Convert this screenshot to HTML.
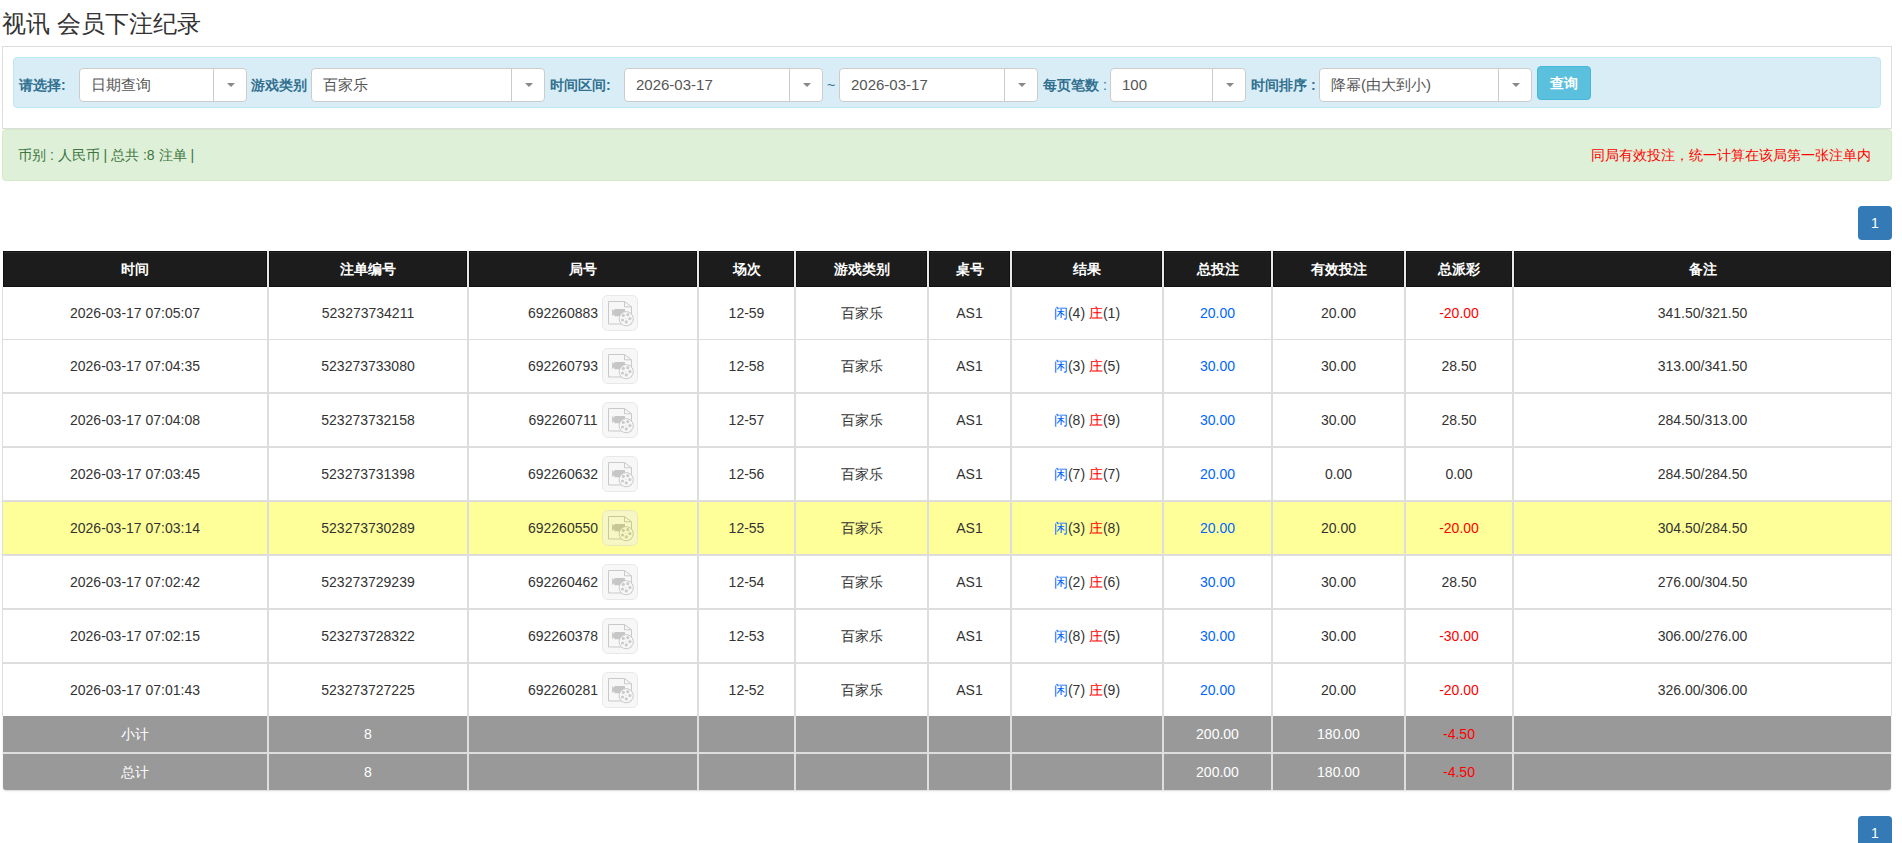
<!DOCTYPE html>
<html><head><meta charset="utf-8"><title>视讯 会员下注纪录</title>
<style>
*{box-sizing:border-box}
html,body{margin:0;padding:0;background:#fff}
body{width:1902px;height:843px;overflow:hidden;position:relative;font-family:"Liberation Sans",sans-serif;color:#333}
.a{position:absolute}
.title{left:2px;top:1px;font-size:24px;line-height:46px;color:#333;white-space:nowrap}
.box{left:2px;top:46px;width:1890px;height:83px;border:1px solid #ddd}
.info{left:13px;top:57px;width:1868px;height:51px;background:#d9edf7;border:1px solid #bce8f1;border-radius:4px}
.lbl{font-size:14px;font-weight:bold;color:#31708f;white-space:nowrap;line-height:34px;top:68px}
.sel{top:68px;height:34px;background:#fff;border:1px solid #ccc;border-radius:4px}
.sel .t{position:absolute;left:11px;top:0;line-height:32px;font-size:15px;color:#555;white-space:nowrap}
.sel .d{position:absolute;top:0;bottom:0;width:1px;background:#ccc}
.sel .c{position:absolute;top:14px;width:0;height:0;border-left:4px solid transparent;border-right:4px solid transparent;border-top:4px solid #888}
.btn{left:1537px;top:66px;width:54px;height:34px;background:#5bc0de;border:1px solid #46b8da;border-radius:4px;color:#fff;font-weight:bold;font-size:14px;text-align:center;line-height:33px}
.ok{left:2px;top:129px;width:1890px;height:52px;background:#dff0d8;border:1px solid #d6e9c6;border-radius:4px;font-size:14px;line-height:50px}
.pg{left:1858px;width:34px;height:34px;background:#337ab7;border-radius:4px;color:#fff;font-size:14px;text-align:center;line-height:34px}
.cell{text-align:center;white-space:nowrap;font-size:14px}
.hd{color:#fff;font-weight:bold;font-size:14px}
.b{color:#0066ff}.r{color:#ff0000}
.ib{width:36px;height:36px;border:1px solid #e3e3e3;border-radius:5px;background:#f9f9f9}
</style></head><body>

<div class="a title">视讯 会员下注纪录</div>
<div class="a box"></div>
<div class="a info"></div>
<div class="a lbl" style="left:19px">请选择:</div>
<div class="a sel" style="left:79px;width:168px"><div class="t">日期查询</div><div class="d" style="left:133px"></div><div class="c" style="left:147px"></div></div>
<div class="a lbl" style="left:251px">游戏类别</div>
<div class="a sel" style="left:311px;width:234px"><div class="t">百家乐</div><div class="d" style="left:199px"></div><div class="c" style="left:213px"></div></div>
<div class="a lbl" style="left:550px">时间区间:</div>
<div class="a sel" style="left:624px;width:199px"><div class="t">2026-03-17</div><div class="d" style="left:164px"></div><div class="c" style="left:178px"></div></div>
<div class="a lbl" style="left:827px;font-weight:normal;color:#31708f">~</div>
<div class="a sel" style="left:839px;width:199px"><div class="t">2026-03-17</div><div class="d" style="left:164px"></div><div class="c" style="left:178px"></div></div>
<div class="a lbl" style="left:1043px">每页笔数 <span style="font-weight:normal">:</span></div>
<div class="a sel" style="left:1110px;width:136px"><div class="t">100</div><div class="d" style="left:101px"></div><div class="c" style="left:115px"></div></div>
<div class="a lbl" style="left:1251px">时间排序 :</div>
<div class="a sel" style="left:1319px;width:213px"><div class="t">降幂(由大到小)</div><div class="d" style="left:178px"></div><div class="c" style="left:192px"></div></div>
<div class="a btn">查询</div>
<div class="a ok"><span class="a" style="left:15px;top:0;color:#3c763d;white-space:nowrap">币别 : 人民币 | 总共 :8 注单 |</span><span class="a" style="right:20px;top:0;color:#ff0000;white-space:nowrap">同局有效投注，统一计算在该局第一张注单内</span></div>
<div class="a pg" style="top:206px">1</div>
<div class="a" style="left:3px;top:251px;width:1888px;height:36px;background:#1c1c1c;border:1px solid #111"></div>
<div class="a" style="left:4px;top:252px;width:1886px;height:1px;background:#2a2a2a"></div>
<div class="a cell hd" style="left:3px;top:251px;width:264px;height:36px;line-height:36px">时间</div>
<div class="a cell hd" style="left:269px;top:251px;width:198px;height:36px;line-height:36px">注单编号</div>
<div class="a cell hd" style="left:469px;top:251px;width:228px;height:36px;line-height:36px">局号</div>
<div class="a cell hd" style="left:699px;top:251px;width:95px;height:36px;line-height:36px">场次</div>
<div class="a cell hd" style="left:796px;top:251px;width:131px;height:36px;line-height:36px">游戏类别</div>
<div class="a cell hd" style="left:929px;top:251px;width:81px;height:36px;line-height:36px">桌号</div>
<div class="a cell hd" style="left:1012px;top:251px;width:150px;height:36px;line-height:36px">结果</div>
<div class="a cell hd" style="left:1164px;top:251px;width:107px;height:36px;line-height:36px">总投注</div>
<div class="a cell hd" style="left:1273px;top:251px;width:131px;height:36px;line-height:36px">有效投注</div>
<div class="a cell hd" style="left:1406px;top:251px;width:106px;height:36px;line-height:36px">总派彩</div>
<div class="a cell hd" style="left:1514px;top:251px;width:377px;height:36px;line-height:36px">备注</div>
<div class="a" style="left:266px;top:251px;width:4px;height:36px;background:#111"></div>
<div class="a" style="left:267px;top:250px;width:2px;height:37px;background:#e8e8e8"></div>
<div class="a" style="left:466px;top:251px;width:4px;height:36px;background:#111"></div>
<div class="a" style="left:467px;top:250px;width:2px;height:37px;background:#e8e8e8"></div>
<div class="a" style="left:696px;top:251px;width:4px;height:36px;background:#111"></div>
<div class="a" style="left:697px;top:250px;width:2px;height:37px;background:#e8e8e8"></div>
<div class="a" style="left:793px;top:251px;width:4px;height:36px;background:#111"></div>
<div class="a" style="left:794px;top:250px;width:2px;height:37px;background:#e8e8e8"></div>
<div class="a" style="left:926px;top:251px;width:4px;height:36px;background:#111"></div>
<div class="a" style="left:927px;top:250px;width:2px;height:37px;background:#e8e8e8"></div>
<div class="a" style="left:1009px;top:251px;width:4px;height:36px;background:#111"></div>
<div class="a" style="left:1010px;top:250px;width:2px;height:37px;background:#e8e8e8"></div>
<div class="a" style="left:1161px;top:251px;width:4px;height:36px;background:#111"></div>
<div class="a" style="left:1162px;top:250px;width:2px;height:37px;background:#e8e8e8"></div>
<div class="a" style="left:1270px;top:251px;width:4px;height:36px;background:#111"></div>
<div class="a" style="left:1271px;top:250px;width:2px;height:37px;background:#e8e8e8"></div>
<div class="a" style="left:1403px;top:251px;width:4px;height:36px;background:#111"></div>
<div class="a" style="left:1404px;top:250px;width:2px;height:37px;background:#e8e8e8"></div>
<div class="a" style="left:1511px;top:251px;width:4px;height:36px;background:#111"></div>
<div class="a" style="left:1512px;top:250px;width:2px;height:37px;background:#e8e8e8"></div>
<div class="a" style="left:3px;top:287px;width:1888px;height:52px;background:#fff"></div>
<div class="a cell" style="left:3px;top:287px;width:264px;height:52px;line-height:52px">2026-03-17 07:05:07</div>
<div class="a cell" style="left:269px;top:287px;width:198px;height:52px;line-height:52px">523273734211</div>
<div class="a cell" style="left:469px;top:287px;width:228px;height:52px;line-height:52px">692260883<span style="display:inline-block;width:40px"></span></div>
<div class="a cell" style="left:699px;top:287px;width:95px;height:52px;line-height:52px">12-59</div>
<div class="a cell" style="left:796px;top:287px;width:131px;height:52px;line-height:52px">百家乐</div>
<div class="a cell" style="left:929px;top:287px;width:81px;height:52px;line-height:52px">AS1</div>
<div class="a cell" style="left:1012px;top:287px;width:150px;height:52px;line-height:52px"><span class="b">闲</span>(4) <span class="r">庄</span>(1)</div>
<div class="a cell b" style="left:1164px;top:287px;width:107px;height:52px;line-height:52px">20.00</div>
<div class="a cell" style="left:1273px;top:287px;width:131px;height:52px;line-height:52px">20.00</div>
<div class="a cell r" style="left:1406px;top:287px;width:106px;height:52px;line-height:52px">-20.00</div>
<div class="a cell" style="left:1514px;top:287px;width:377px;height:52px;line-height:52px">341.50/321.50</div>
<svg class="a" style="left:600px;top:293px;opacity:.5" width="40" height="40" viewBox="0 0 40 40"><rect x="2.5" y="2.5" width="35" height="35" rx="5" fill="#f1f1f1" stroke="#d3d3d3"/><path d="M8.5 8.5H24.5L31.5 13.8V31H8.5Z" fill="none" stroke="#959595"/><path d="M24.5 8.5V13.8H31.5" fill="none" stroke="#959595"/><path d="M12.1 15.9L14.3 18V16H25V23.3H14.3V21.2L12.1 22.9Z" fill="#8f8f8f"/><circle cx="26.2" cy="25.7" r="7.1" fill="#f1f1f1" stroke="#959595"/><g fill="#9a9a9a"><circle cx="23.3" cy="22.4" r="1.6"/><circle cx="27.8" cy="21.7" r="1.6"/><circle cx="29.9" cy="25.6" r="1.6"/><circle cx="26.3" cy="28.9" r="1.6"/><circle cx="22.5" cy="27" r="1.6"/><circle cx="25.9" cy="25.4" r=".5"/></g></svg>
<div class="a" style="left:3px;top:340px;width:1888px;height:52px;background:#fff"></div>
<div class="a cell" style="left:3px;top:340px;width:264px;height:52px;line-height:52px">2026-03-17 07:04:35</div>
<div class="a cell" style="left:269px;top:340px;width:198px;height:52px;line-height:52px">523273733080</div>
<div class="a cell" style="left:469px;top:340px;width:228px;height:52px;line-height:52px">692260793<span style="display:inline-block;width:40px"></span></div>
<div class="a cell" style="left:699px;top:340px;width:95px;height:52px;line-height:52px">12-58</div>
<div class="a cell" style="left:796px;top:340px;width:131px;height:52px;line-height:52px">百家乐</div>
<div class="a cell" style="left:929px;top:340px;width:81px;height:52px;line-height:52px">AS1</div>
<div class="a cell" style="left:1012px;top:340px;width:150px;height:52px;line-height:52px"><span class="b">闲</span>(3) <span class="r">庄</span>(5)</div>
<div class="a cell b" style="left:1164px;top:340px;width:107px;height:52px;line-height:52px">30.00</div>
<div class="a cell" style="left:1273px;top:340px;width:131px;height:52px;line-height:52px">30.00</div>
<div class="a cell" style="left:1406px;top:340px;width:106px;height:52px;line-height:52px">28.50</div>
<div class="a cell" style="left:1514px;top:340px;width:377px;height:52px;line-height:52px">313.00/341.50</div>
<svg class="a" style="left:600px;top:346px;opacity:.5" width="40" height="40" viewBox="0 0 40 40"><rect x="2.5" y="2.5" width="35" height="35" rx="5" fill="#f1f1f1" stroke="#d3d3d3"/><path d="M8.5 8.5H24.5L31.5 13.8V31H8.5Z" fill="none" stroke="#959595"/><path d="M24.5 8.5V13.8H31.5" fill="none" stroke="#959595"/><path d="M12.1 15.9L14.3 18V16H25V23.3H14.3V21.2L12.1 22.9Z" fill="#8f8f8f"/><circle cx="26.2" cy="25.7" r="7.1" fill="#f1f1f1" stroke="#959595"/><g fill="#9a9a9a"><circle cx="23.3" cy="22.4" r="1.6"/><circle cx="27.8" cy="21.7" r="1.6"/><circle cx="29.9" cy="25.6" r="1.6"/><circle cx="26.3" cy="28.9" r="1.6"/><circle cx="22.5" cy="27" r="1.6"/><circle cx="25.9" cy="25.4" r=".5"/></g></svg>
<div class="a" style="left:3px;top:394px;width:1888px;height:52px;background:#fff"></div>
<div class="a cell" style="left:3px;top:394px;width:264px;height:52px;line-height:52px">2026-03-17 07:04:08</div>
<div class="a cell" style="left:269px;top:394px;width:198px;height:52px;line-height:52px">523273732158</div>
<div class="a cell" style="left:469px;top:394px;width:228px;height:52px;line-height:52px">692260711<span style="display:inline-block;width:40px"></span></div>
<div class="a cell" style="left:699px;top:394px;width:95px;height:52px;line-height:52px">12-57</div>
<div class="a cell" style="left:796px;top:394px;width:131px;height:52px;line-height:52px">百家乐</div>
<div class="a cell" style="left:929px;top:394px;width:81px;height:52px;line-height:52px">AS1</div>
<div class="a cell" style="left:1012px;top:394px;width:150px;height:52px;line-height:52px"><span class="b">闲</span>(8) <span class="r">庄</span>(9)</div>
<div class="a cell b" style="left:1164px;top:394px;width:107px;height:52px;line-height:52px">30.00</div>
<div class="a cell" style="left:1273px;top:394px;width:131px;height:52px;line-height:52px">30.00</div>
<div class="a cell" style="left:1406px;top:394px;width:106px;height:52px;line-height:52px">28.50</div>
<div class="a cell" style="left:1514px;top:394px;width:377px;height:52px;line-height:52px">284.50/313.00</div>
<svg class="a" style="left:600px;top:400px;opacity:.5" width="40" height="40" viewBox="0 0 40 40"><rect x="2.5" y="2.5" width="35" height="35" rx="5" fill="#f1f1f1" stroke="#d3d3d3"/><path d="M8.5 8.5H24.5L31.5 13.8V31H8.5Z" fill="none" stroke="#959595"/><path d="M24.5 8.5V13.8H31.5" fill="none" stroke="#959595"/><path d="M12.1 15.9L14.3 18V16H25V23.3H14.3V21.2L12.1 22.9Z" fill="#8f8f8f"/><circle cx="26.2" cy="25.7" r="7.1" fill="#f1f1f1" stroke="#959595"/><g fill="#9a9a9a"><circle cx="23.3" cy="22.4" r="1.6"/><circle cx="27.8" cy="21.7" r="1.6"/><circle cx="29.9" cy="25.6" r="1.6"/><circle cx="26.3" cy="28.9" r="1.6"/><circle cx="22.5" cy="27" r="1.6"/><circle cx="25.9" cy="25.4" r=".5"/></g></svg>
<div class="a" style="left:3px;top:448px;width:1888px;height:52px;background:#fff"></div>
<div class="a cell" style="left:3px;top:448px;width:264px;height:52px;line-height:52px">2026-03-17 07:03:45</div>
<div class="a cell" style="left:269px;top:448px;width:198px;height:52px;line-height:52px">523273731398</div>
<div class="a cell" style="left:469px;top:448px;width:228px;height:52px;line-height:52px">692260632<span style="display:inline-block;width:40px"></span></div>
<div class="a cell" style="left:699px;top:448px;width:95px;height:52px;line-height:52px">12-56</div>
<div class="a cell" style="left:796px;top:448px;width:131px;height:52px;line-height:52px">百家乐</div>
<div class="a cell" style="left:929px;top:448px;width:81px;height:52px;line-height:52px">AS1</div>
<div class="a cell" style="left:1012px;top:448px;width:150px;height:52px;line-height:52px"><span class="b">闲</span>(7) <span class="r">庄</span>(7)</div>
<div class="a cell b" style="left:1164px;top:448px;width:107px;height:52px;line-height:52px">20.00</div>
<div class="a cell" style="left:1273px;top:448px;width:131px;height:52px;line-height:52px">0.00</div>
<div class="a cell" style="left:1406px;top:448px;width:106px;height:52px;line-height:52px">0.00</div>
<div class="a cell" style="left:1514px;top:448px;width:377px;height:52px;line-height:52px">284.50/284.50</div>
<svg class="a" style="left:600px;top:454px;opacity:.5" width="40" height="40" viewBox="0 0 40 40"><rect x="2.5" y="2.5" width="35" height="35" rx="5" fill="#f1f1f1" stroke="#d3d3d3"/><path d="M8.5 8.5H24.5L31.5 13.8V31H8.5Z" fill="none" stroke="#959595"/><path d="M24.5 8.5V13.8H31.5" fill="none" stroke="#959595"/><path d="M12.1 15.9L14.3 18V16H25V23.3H14.3V21.2L12.1 22.9Z" fill="#8f8f8f"/><circle cx="26.2" cy="25.7" r="7.1" fill="#f1f1f1" stroke="#959595"/><g fill="#9a9a9a"><circle cx="23.3" cy="22.4" r="1.6"/><circle cx="27.8" cy="21.7" r="1.6"/><circle cx="29.9" cy="25.6" r="1.6"/><circle cx="26.3" cy="28.9" r="1.6"/><circle cx="22.5" cy="27" r="1.6"/><circle cx="25.9" cy="25.4" r=".5"/></g></svg>
<div class="a" style="left:3px;top:502px;width:1888px;height:52px;background:#ffff99"></div>
<div class="a cell" style="left:3px;top:502px;width:264px;height:52px;line-height:52px">2026-03-17 07:03:14</div>
<div class="a cell" style="left:269px;top:502px;width:198px;height:52px;line-height:52px">523273730289</div>
<div class="a cell" style="left:469px;top:502px;width:228px;height:52px;line-height:52px">692260550<span style="display:inline-block;width:40px"></span></div>
<div class="a cell" style="left:699px;top:502px;width:95px;height:52px;line-height:52px">12-55</div>
<div class="a cell" style="left:796px;top:502px;width:131px;height:52px;line-height:52px">百家乐</div>
<div class="a cell" style="left:929px;top:502px;width:81px;height:52px;line-height:52px">AS1</div>
<div class="a cell" style="left:1012px;top:502px;width:150px;height:52px;line-height:52px"><span class="b">闲</span>(3) <span class="r">庄</span>(8)</div>
<div class="a cell b" style="left:1164px;top:502px;width:107px;height:52px;line-height:52px">20.00</div>
<div class="a cell" style="left:1273px;top:502px;width:131px;height:52px;line-height:52px">20.00</div>
<div class="a cell r" style="left:1406px;top:502px;width:106px;height:52px;line-height:52px">-20.00</div>
<div class="a cell" style="left:1514px;top:502px;width:377px;height:52px;line-height:52px">304.50/284.50</div>
<svg class="a" style="left:600px;top:508px;opacity:.5" width="40" height="40" viewBox="0 0 40 40"><rect x="2.5" y="2.5" width="35" height="35" rx="5" fill="#f1f1f1" stroke="#d3d3d3"/><path d="M8.5 8.5H24.5L31.5 13.8V31H8.5Z" fill="none" stroke="#959595"/><path d="M24.5 8.5V13.8H31.5" fill="none" stroke="#959595"/><path d="M12.1 15.9L14.3 18V16H25V23.3H14.3V21.2L12.1 22.9Z" fill="#8f8f8f"/><circle cx="26.2" cy="25.7" r="7.1" fill="#f1f1f1" stroke="#959595"/><g fill="#9a9a9a"><circle cx="23.3" cy="22.4" r="1.6"/><circle cx="27.8" cy="21.7" r="1.6"/><circle cx="29.9" cy="25.6" r="1.6"/><circle cx="26.3" cy="28.9" r="1.6"/><circle cx="22.5" cy="27" r="1.6"/><circle cx="25.9" cy="25.4" r=".5"/></g></svg>
<div class="a" style="left:3px;top:556px;width:1888px;height:52px;background:#fff"></div>
<div class="a cell" style="left:3px;top:556px;width:264px;height:52px;line-height:52px">2026-03-17 07:02:42</div>
<div class="a cell" style="left:269px;top:556px;width:198px;height:52px;line-height:52px">523273729239</div>
<div class="a cell" style="left:469px;top:556px;width:228px;height:52px;line-height:52px">692260462<span style="display:inline-block;width:40px"></span></div>
<div class="a cell" style="left:699px;top:556px;width:95px;height:52px;line-height:52px">12-54</div>
<div class="a cell" style="left:796px;top:556px;width:131px;height:52px;line-height:52px">百家乐</div>
<div class="a cell" style="left:929px;top:556px;width:81px;height:52px;line-height:52px">AS1</div>
<div class="a cell" style="left:1012px;top:556px;width:150px;height:52px;line-height:52px"><span class="b">闲</span>(2) <span class="r">庄</span>(6)</div>
<div class="a cell b" style="left:1164px;top:556px;width:107px;height:52px;line-height:52px">30.00</div>
<div class="a cell" style="left:1273px;top:556px;width:131px;height:52px;line-height:52px">30.00</div>
<div class="a cell" style="left:1406px;top:556px;width:106px;height:52px;line-height:52px">28.50</div>
<div class="a cell" style="left:1514px;top:556px;width:377px;height:52px;line-height:52px">276.00/304.50</div>
<svg class="a" style="left:600px;top:562px;opacity:.5" width="40" height="40" viewBox="0 0 40 40"><rect x="2.5" y="2.5" width="35" height="35" rx="5" fill="#f1f1f1" stroke="#d3d3d3"/><path d="M8.5 8.5H24.5L31.5 13.8V31H8.5Z" fill="none" stroke="#959595"/><path d="M24.5 8.5V13.8H31.5" fill="none" stroke="#959595"/><path d="M12.1 15.9L14.3 18V16H25V23.3H14.3V21.2L12.1 22.9Z" fill="#8f8f8f"/><circle cx="26.2" cy="25.7" r="7.1" fill="#f1f1f1" stroke="#959595"/><g fill="#9a9a9a"><circle cx="23.3" cy="22.4" r="1.6"/><circle cx="27.8" cy="21.7" r="1.6"/><circle cx="29.9" cy="25.6" r="1.6"/><circle cx="26.3" cy="28.9" r="1.6"/><circle cx="22.5" cy="27" r="1.6"/><circle cx="25.9" cy="25.4" r=".5"/></g></svg>
<div class="a" style="left:3px;top:610px;width:1888px;height:52px;background:#fff"></div>
<div class="a cell" style="left:3px;top:610px;width:264px;height:52px;line-height:52px">2026-03-17 07:02:15</div>
<div class="a cell" style="left:269px;top:610px;width:198px;height:52px;line-height:52px">523273728322</div>
<div class="a cell" style="left:469px;top:610px;width:228px;height:52px;line-height:52px">692260378<span style="display:inline-block;width:40px"></span></div>
<div class="a cell" style="left:699px;top:610px;width:95px;height:52px;line-height:52px">12-53</div>
<div class="a cell" style="left:796px;top:610px;width:131px;height:52px;line-height:52px">百家乐</div>
<div class="a cell" style="left:929px;top:610px;width:81px;height:52px;line-height:52px">AS1</div>
<div class="a cell" style="left:1012px;top:610px;width:150px;height:52px;line-height:52px"><span class="b">闲</span>(8) <span class="r">庄</span>(5)</div>
<div class="a cell b" style="left:1164px;top:610px;width:107px;height:52px;line-height:52px">30.00</div>
<div class="a cell" style="left:1273px;top:610px;width:131px;height:52px;line-height:52px">30.00</div>
<div class="a cell r" style="left:1406px;top:610px;width:106px;height:52px;line-height:52px">-30.00</div>
<div class="a cell" style="left:1514px;top:610px;width:377px;height:52px;line-height:52px">306.00/276.00</div>
<svg class="a" style="left:600px;top:616px;opacity:.5" width="40" height="40" viewBox="0 0 40 40"><rect x="2.5" y="2.5" width="35" height="35" rx="5" fill="#f1f1f1" stroke="#d3d3d3"/><path d="M8.5 8.5H24.5L31.5 13.8V31H8.5Z" fill="none" stroke="#959595"/><path d="M24.5 8.5V13.8H31.5" fill="none" stroke="#959595"/><path d="M12.1 15.9L14.3 18V16H25V23.3H14.3V21.2L12.1 22.9Z" fill="#8f8f8f"/><circle cx="26.2" cy="25.7" r="7.1" fill="#f1f1f1" stroke="#959595"/><g fill="#9a9a9a"><circle cx="23.3" cy="22.4" r="1.6"/><circle cx="27.8" cy="21.7" r="1.6"/><circle cx="29.9" cy="25.6" r="1.6"/><circle cx="26.3" cy="28.9" r="1.6"/><circle cx="22.5" cy="27" r="1.6"/><circle cx="25.9" cy="25.4" r=".5"/></g></svg>
<div class="a" style="left:3px;top:664px;width:1888px;height:52px;background:#fff"></div>
<div class="a cell" style="left:3px;top:664px;width:264px;height:52px;line-height:52px">2026-03-17 07:01:43</div>
<div class="a cell" style="left:269px;top:664px;width:198px;height:52px;line-height:52px">523273727225</div>
<div class="a cell" style="left:469px;top:664px;width:228px;height:52px;line-height:52px">692260281<span style="display:inline-block;width:40px"></span></div>
<div class="a cell" style="left:699px;top:664px;width:95px;height:52px;line-height:52px">12-52</div>
<div class="a cell" style="left:796px;top:664px;width:131px;height:52px;line-height:52px">百家乐</div>
<div class="a cell" style="left:929px;top:664px;width:81px;height:52px;line-height:52px">AS1</div>
<div class="a cell" style="left:1012px;top:664px;width:150px;height:52px;line-height:52px"><span class="b">闲</span>(7) <span class="r">庄</span>(9)</div>
<div class="a cell b" style="left:1164px;top:664px;width:107px;height:52px;line-height:52px">20.00</div>
<div class="a cell" style="left:1273px;top:664px;width:131px;height:52px;line-height:52px">20.00</div>
<div class="a cell r" style="left:1406px;top:664px;width:106px;height:52px;line-height:52px">-20.00</div>
<div class="a cell" style="left:1514px;top:664px;width:377px;height:52px;line-height:52px">326.00/306.00</div>
<svg class="a" style="left:600px;top:670px;opacity:.5" width="40" height="40" viewBox="0 0 40 40"><rect x="2.5" y="2.5" width="35" height="35" rx="5" fill="#f1f1f1" stroke="#d3d3d3"/><path d="M8.5 8.5H24.5L31.5 13.8V31H8.5Z" fill="none" stroke="#959595"/><path d="M24.5 8.5V13.8H31.5" fill="none" stroke="#959595"/><path d="M12.1 15.9L14.3 18V16H25V23.3H14.3V21.2L12.1 22.9Z" fill="#8f8f8f"/><circle cx="26.2" cy="25.7" r="7.1" fill="#f1f1f1" stroke="#959595"/><g fill="#9a9a9a"><circle cx="23.3" cy="22.4" r="1.6"/><circle cx="27.8" cy="21.7" r="1.6"/><circle cx="29.9" cy="25.6" r="1.6"/><circle cx="26.3" cy="28.9" r="1.6"/><circle cx="22.5" cy="27" r="1.6"/><circle cx="25.9" cy="25.4" r=".5"/></g></svg>
<div class="a" style="left:2px;top:339px;width:1890px;height:1px;background:#ddd"></div>
<div class="a" style="left:2px;top:392px;width:1890px;height:2px;background:#ddd"></div>
<div class="a" style="left:2px;top:446px;width:1890px;height:2px;background:#ddd"></div>
<div class="a" style="left:2px;top:500px;width:1890px;height:2px;background:#ddd"></div>
<div class="a" style="left:2px;top:554px;width:1890px;height:2px;background:#ddd"></div>
<div class="a" style="left:2px;top:608px;width:1890px;height:2px;background:#ddd"></div>
<div class="a" style="left:2px;top:662px;width:1890px;height:2px;background:#ddd"></div>
<div class="a" style="left:267px;top:287px;width:2px;height:429px;background:#ddd"></div>
<div class="a" style="left:467px;top:287px;width:2px;height:429px;background:#ddd"></div>
<div class="a" style="left:697px;top:287px;width:2px;height:429px;background:#ddd"></div>
<div class="a" style="left:794px;top:287px;width:2px;height:429px;background:#ddd"></div>
<div class="a" style="left:927px;top:287px;width:2px;height:429px;background:#ddd"></div>
<div class="a" style="left:1010px;top:287px;width:2px;height:429px;background:#ddd"></div>
<div class="a" style="left:1162px;top:287px;width:2px;height:429px;background:#ddd"></div>
<div class="a" style="left:1271px;top:287px;width:2px;height:429px;background:#ddd"></div>
<div class="a" style="left:1404px;top:287px;width:2px;height:429px;background:#ddd"></div>
<div class="a" style="left:1512px;top:287px;width:2px;height:429px;background:#ddd"></div>
<div class="a" style="left:2px;top:287px;width:1px;height:429px;background:#ddd"></div>
<div class="a" style="left:1891px;top:287px;width:1px;height:429px;background:#ddd"></div>
<div class="a" style="left:3px;top:716px;width:1888px;height:74px;background:#999;border-radius:0 0 3px 3px;box-shadow:0 1px 2px rgba(0,0,0,.15)"></div>
<div class="a" style="left:3px;top:752px;width:1888px;height:2px;background:#dedede"></div>
<div class="a" style="left:267px;top:716px;width:2px;height:74px;background:#dedede"></div>
<div class="a" style="left:467px;top:716px;width:2px;height:74px;background:#dedede"></div>
<div class="a" style="left:697px;top:716px;width:2px;height:74px;background:#dedede"></div>
<div class="a" style="left:794px;top:716px;width:2px;height:74px;background:#dedede"></div>
<div class="a" style="left:927px;top:716px;width:2px;height:74px;background:#dedede"></div>
<div class="a" style="left:1010px;top:716px;width:2px;height:74px;background:#dedede"></div>
<div class="a" style="left:1162px;top:716px;width:2px;height:74px;background:#dedede"></div>
<div class="a" style="left:1271px;top:716px;width:2px;height:74px;background:#dedede"></div>
<div class="a" style="left:1404px;top:716px;width:2px;height:74px;background:#dedede"></div>
<div class="a" style="left:1512px;top:716px;width:2px;height:74px;background:#dedede"></div>
<div class="a cell" style="left:3px;top:716px;width:264px;height:36px;line-height:36px;color:#fff">小计</div>
<div class="a cell" style="left:269px;top:716px;width:198px;height:36px;line-height:36px;color:#fff">8</div>
<div class="a cell" style="left:1164px;top:716px;width:107px;height:36px;line-height:36px;color:#fff">200.00</div>
<div class="a cell" style="left:1273px;top:716px;width:131px;height:36px;line-height:36px;color:#fff">180.00</div>
<div class="a cell" style="left:1406px;top:716px;width:106px;height:36px;line-height:36px;color:#ff0000">-4.50</div>
<div class="a cell" style="left:3px;top:754px;width:264px;height:36px;line-height:36px;color:#fff">总计</div>
<div class="a cell" style="left:269px;top:754px;width:198px;height:36px;line-height:36px;color:#fff">8</div>
<div class="a cell" style="left:1164px;top:754px;width:107px;height:36px;line-height:36px;color:#fff">200.00</div>
<div class="a cell" style="left:1273px;top:754px;width:131px;height:36px;line-height:36px;color:#fff">180.00</div>
<div class="a cell" style="left:1406px;top:754px;width:106px;height:36px;line-height:36px;color:#ff0000">-4.50</div>
<div class="a pg" style="top:816px">1</div>
</body></html>
